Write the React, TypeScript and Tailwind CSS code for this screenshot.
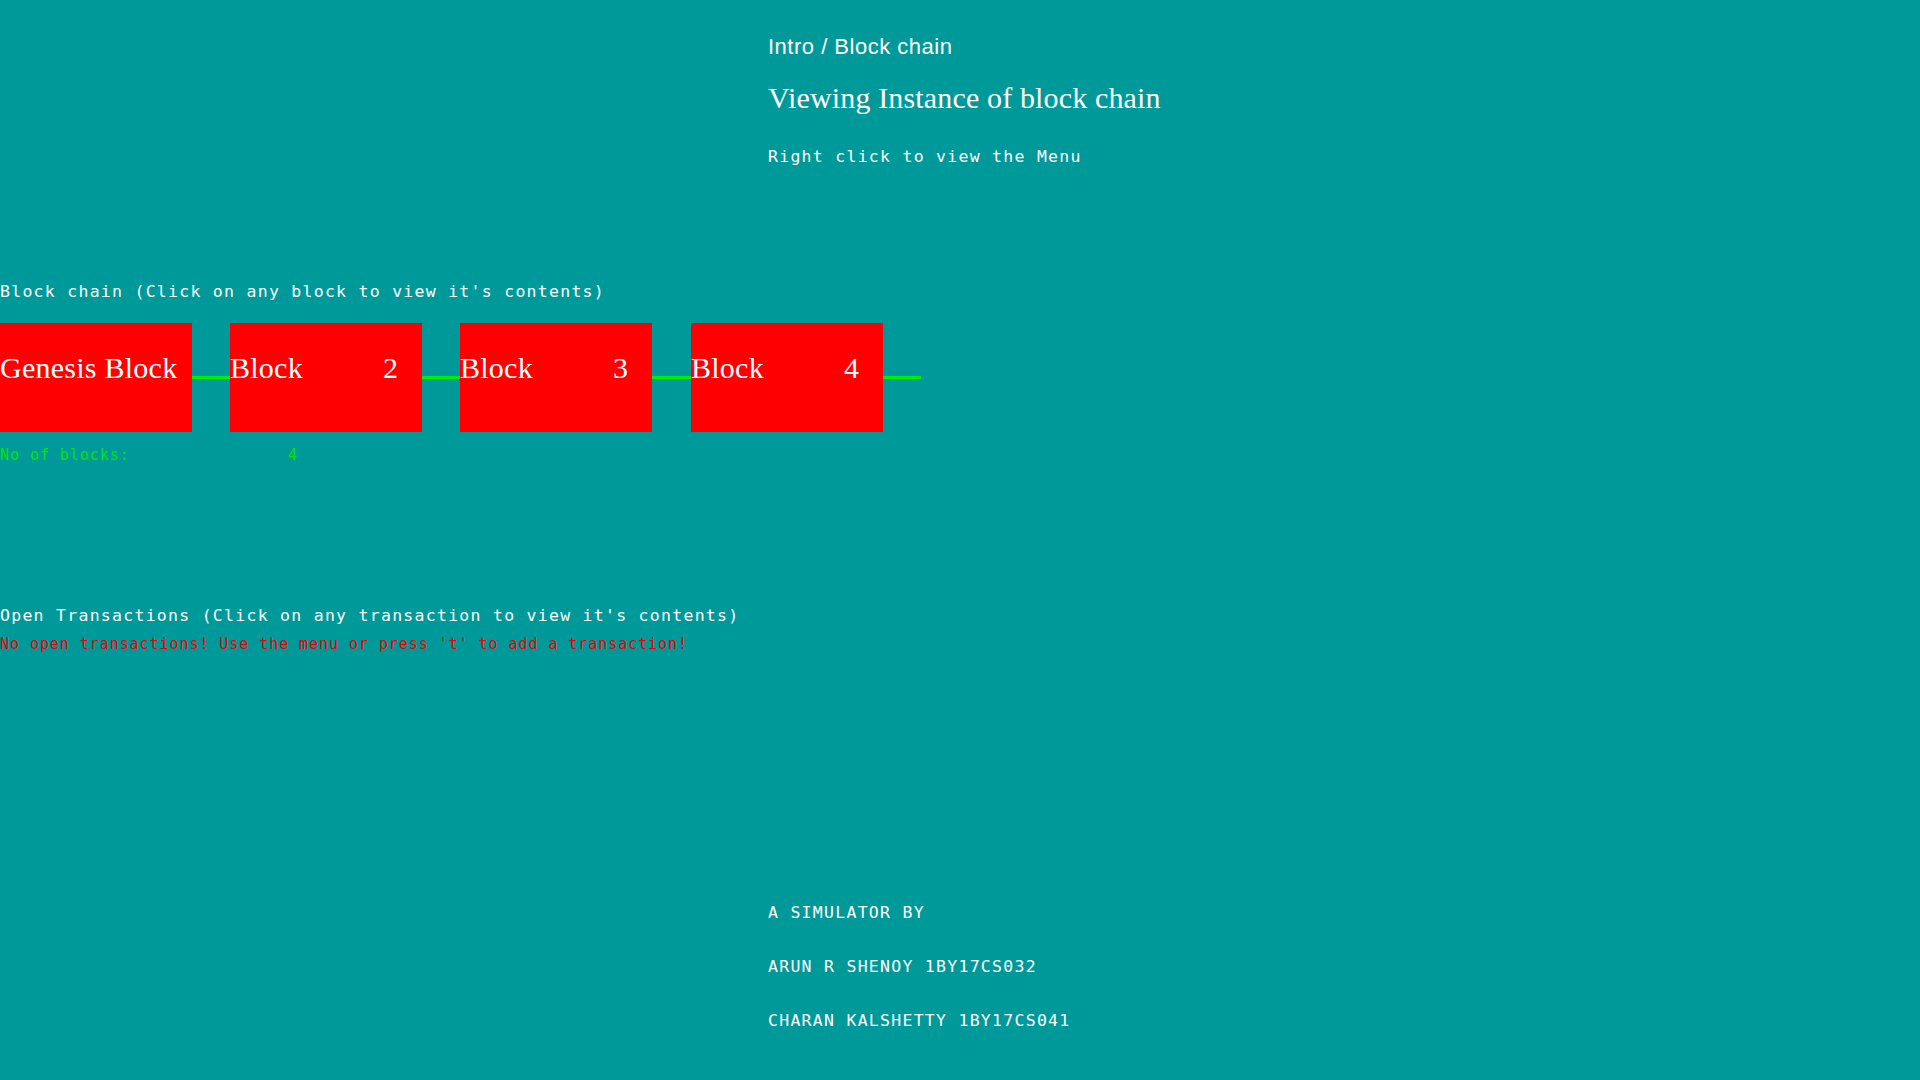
import React from 'react';

const mono = "font-['DejaVu_Sans_Mono','Liberation_Mono',monospace]";

const blocks = [
  { label: 'Genesis Block', num: '', gap: 'w-[38px]' },
  { label: 'Block', num: '2', gap: 'w-[38px]' },
  { label: 'Block', num: '3', gap: 'w-[39px]' },
  { label: 'Block', num: '4', gap: 'w-[38px]' },
];

const Link: React.FC<{ width: string }> = ({ width }) => (
  <div className={`flex h-[109px] ${width} items-center`}>
    <div className="h-[3px] w-full bg-[#00ee00]" />
  </div>
);

const Block: React.FC<{ label: string; num: string }> = ({ label, num }) => (
  <div className="flex h-[109px] w-[192px] items-start bg-[#ff0000] pt-[30px] font-['Liberation_Serif',serif] text-[30px] leading-none tracking-[0.25px] text-white">
    {num ? (
      <>
        <span className="w-[153px] shrink-0 whitespace-nowrap">{label}</span>
        <span>{num}</span>
      </>
    ) : (
      <span className="whitespace-nowrap">{label}</span>
    )}
  </div>
);

export default function App() {
  return (
    <div className="min-h-screen w-full overflow-hidden bg-[#009999] text-white">
      {/* title area */}
      <header className="pl-[768px] pt-[36px]">
        <div className="h-[22px] font-['Liberation_Sans',sans-serif] text-[22px] leading-none tracking-[0.5px]">
          Intro / Block chain
        </div>
        <div className="mt-[25px] h-[30px] whitespace-nowrap font-['Liberation_Serif',serif] text-[30px] leading-none tracking-[0.15px]">
          Viewing Instance of block chain
        </div>
        <div className={`mt-[36px] h-[17px] ${mono} text-[16.5px] leading-none tracking-[1.27px]`}>
          Right click to view the Menu
        </div>
      </header>

      {/* chain */}
      <section className="mt-[118px]">
        <div className={`h-[17px] ${mono} text-[16.5px] leading-none tracking-[1.27px] whitespace-pre`}>
          Block chain (Click on any block to view it's contents)
        </div>
        <div className="mt-[22px] flex">
          {blocks.map((b, i) => (
            <React.Fragment key={i}>
              <Block label={b.label} num={b.num} />
              <Link width={b.gap} />
            </React.Fragment>
          ))}
        </div>
        <div className={`mt-[16px] flex h-[15px] ${mono} text-[15px] leading-none tracking-[0.94px] text-[#00e600]`}>
          <span className="w-[288px] shrink-0">No of blocks:</span>
          <span>4</span>
        </div>
      </section>

      {/* transactions */}
      <section className="mt-[145px]">
        <div className={`h-[17px] ${mono} text-[16.5px] leading-none tracking-[1.27px] whitespace-pre`}>
          Open Transactions (Click on any transaction to view it's contents)
        </div>
        <div className={`mt-[12px] h-[15px] ${mono} text-[15px] leading-none tracking-[0.94px] whitespace-pre text-[#ee0000]`}>
          No open transactions! Use the menu or press 't' to add a transaction!
        </div>
      </section>

      {/* credits */}
      <footer className={`mt-[253px] pl-[768px] ${mono} text-[16.5px] leading-none tracking-[1.27px]`}>
        <div className="h-[17px]">A SIMULATOR BY</div>
        <div className="mt-[37px] h-[17px]">ARUN R SHENOY 1BY17CS032</div>
        <div className="mt-[37px] h-[17px]">CHARAN KALSHETTY 1BY17CS041</div>
      </footer>
    </div>
  );
}
